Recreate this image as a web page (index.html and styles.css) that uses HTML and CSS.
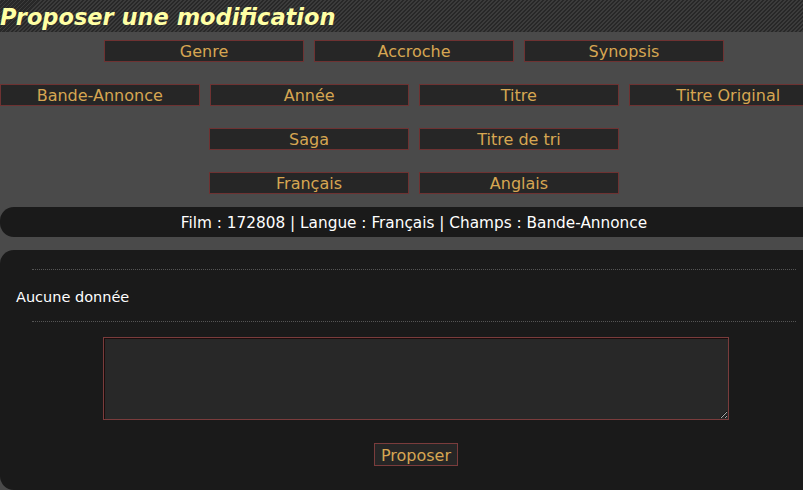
FILE: index.html
```html
<!DOCTYPE html>
<html lang="fr">
<head>
  <meta charset="UTF-8">
  <title>Proposer une modification</title>
  <link rel="stylesheet" href="styles.css">
</head>
<body>
  <div class="page">
    <h1 class="title">Proposer une modification</h1>
    <div class="fields">
      <div class="row">
        <button class="field">Genre</button>
        <button class="field">Accroche</button>
        <button class="field">Synopsis</button>
      </div>
      <div class="row">
        <button class="field">Bande-Annonce</button>
        <button class="field">Année</button>
        <button class="field">Titre</button>
        <button class="field">Titre Original</button>
      </div>
      <div class="row">
        <button class="field">Saga</button>
        <button class="field">Titre de tri</button>
      </div>
      <div class="row">
        <button class="field">Français</button>
        <button class="field">Anglais</button>
      </div>
    </div>
    <div class="info">Film : 172808 | Langue : Français | Champs : Bande-Annonce</div>
    <div class="panel">
      <div class="current">Aucune donnée</div>
      <form class="proposal">
        <textarea class="proposal-text"></textarea>
        <button class="submit" type="button">Proposer</button>
      </form>
    </div>
  </div>
</body>
</html>
```

FILE: styles.css
```css
html, body {
  margin: 0;
  padding: 0;
  overflow: hidden;
}
body {
  background-color: #4a4a4a;
  font-family: "DejaVu Sans", Verdana, sans-serif;
  color: #fff;
}
.page {
  width: 828px;
}
.title {
  margin: 0;
  height: 32px;
  line-height: 34px;
  font-size: 22.5px;
  font-weight: bold;
  font-style: italic;
  color: #ffffa4;
  background: repeating-linear-gradient(135deg, #3c3c3c 0 1.4px, #282828 1.4px 2.83px);
}
.fields {
  display: flex;
  flex-direction: column;
  gap: 22px;
  padding-top: 8px;
}
.row {
  display: flex;
  justify-content: center;
  gap: 10px;
}
.field,
.submit {
  font-family: "DejaVu Sans", Verdana, sans-serif;
  background-color: #262626;
  color: #d6a652;
  border: 1px solid #6e3232;
  padding: 0;
  cursor: pointer;
}
.field {
  width: 200px;
  height: 22px;
  font-size: 16px;
  line-height: 22px;
}
.info {
  margin-top: 13px;
  height: 30px;
  line-height: 33px;
  background-color: #1a1a1a;
  border-radius: 14px;
  text-align: center;
  font-size: 15.3px;
}
.panel {
  margin-top: 13px;
  height: 221px;
  background-color: #1a1a1a;
  border-radius: 14px;
  padding-top: 19px;
}
.current {
  margin: 0 32px;
  border-top: 1px dotted #555;
  border-bottom: 1px dotted #555;
  height: 51px;
  line-height: 55px;
  font-size: 14.5px;
  text-indent: -16px;
}
.proposal {
  display: flex;
  flex-direction: column;
  align-items: center;
  gap: 23px;
  padding-top: 15px;
  padding-left: 4px;
}
.proposal-text {
  width: 624px;
  height: 81px;
  margin: 0;
  padding: 0;
  background-color: #282828;
  border: 1px solid #7a3c3c;
  box-shadow: inset 1px 1px 0 #1a0c0c;
  color: #fff;
}
.submit {
  height: 23px;
  padding: 0 6px;
  font-size: 16px;
  line-height: 23px;
  border-color: #7a3c3c;
}
```
